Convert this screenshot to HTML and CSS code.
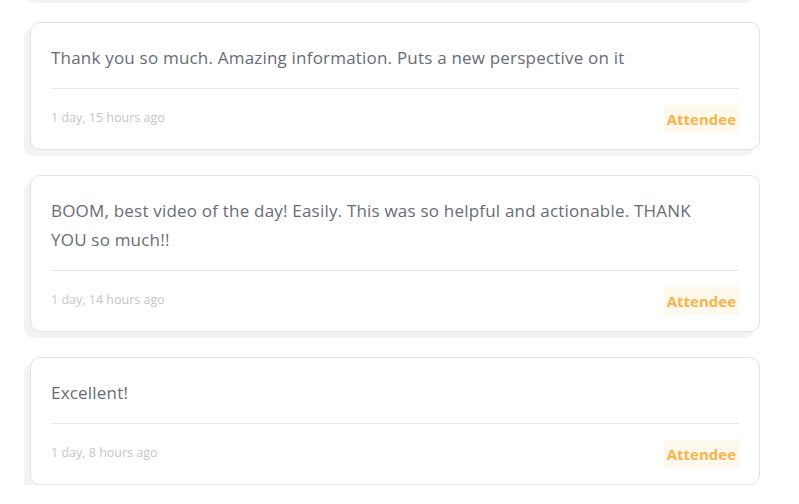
FILE: index.html
```html
<!DOCTYPE html>
<html>
<head>
<meta charset="utf-8">
<link rel="stylesheet" href="styles.css">
</head>
<body>
<div class="list">
  <div class="card card-prev"></div>
  <div class="card">
    <p class="msg">Thank you so much. Amazing information. Puts a new perspective on it</p>
    <div class="foot"><span class="time">1 day, 15 hours ago</span><span class="role">Attendee</span></div>
  </div>
  <div class="card">
    <p class="msg">BOOM, best video of the day! Easily. This was so helpful and actionable. THANK YOU so much!!</p>
    <div class="foot"><span class="time">1 day, 14 hours ago</span><span class="role">Attendee</span></div>
  </div>
  <div class="card">
    <p class="msg">Excellent!</p>
    <div class="foot"><span class="time">1 day, 8 hours ago</span><span class="role">Attendee</span></div>
  </div>
</div>
</body>
</html>
```
FILE: styles.css
```css
html, body {
  margin: 0;
  padding: 0;
  background: #ffffff;
  overflow: hidden;
}
body {
  font-family: "Open Sans", Lato, sans-serif;
}
.list {
  margin-top: -131px;
  padding-left: 30px;
  width: 730px;
  display: flex;
  flex-direction: column;
  gap: 25px;
}
.card {
  border: 1px solid #e2e2e4;
  border-radius: 10px;
  background: #fff;
  box-shadow: -6px 6px 0 #f3f3f4;
  padding: 20px 20px 16px;
}
.card-prev {
  height: 90px;
}
.msg {
  margin: 0;
  padding: 0 14px 16px 0;
  border-bottom: 1px solid #e6e6e8;
  font-size: 17px;
  letter-spacing: 0.2px;
  line-height: 29px;
  color: #676c75;
}
.foot {
  margin-top: 16px;
  display: flex;
  justify-content: space-between;
  align-items: center;
  height: 28px;
}
.time {
  font-size: 12.5px;
  color: #c3c6cb;
  margin-top: -4px;
}
.role {
  background: #fff8ed;
  color: #f8b44a;
  font-weight: 700;
  font-size: 15px;
  line-height: 28px;
  padding: 0 3px;
}
```
